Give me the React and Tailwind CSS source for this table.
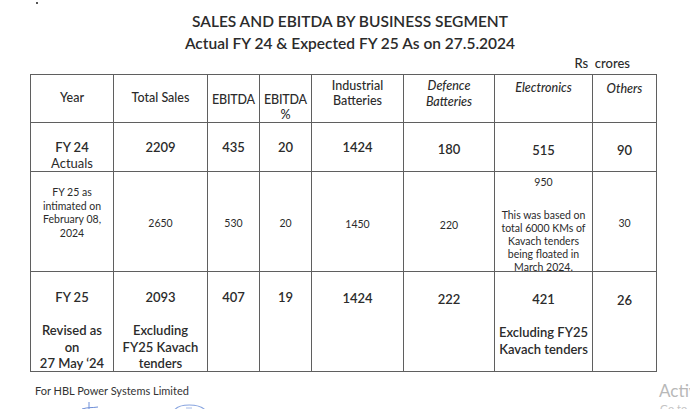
export default function App() {
    const th = "border border-[#5f5f5f] align-top text-center font-medium text-[12.5px] leading-[15px] text-[#2b2b2b]";
    const td = "border border-[#5f5f5f] align-top text-center text-[#2b2b2b]";
    const big = "font-semibold text-[13px] leading-[16px]";
    const small = "text-[10.5px] leading-[13.5px]";

    return (
        <div className="relative w-[690px] h-[409px] overflow-hidden bg-white font-['Lato',sans-serif] text-[#2b2b2b]">
            <div className="absolute left-[36px] top-[2px] w-[2px] h-[2px] bg-[#555]"></div>

            <div className="pt-[10px] pl-[10px] text-center font-semibold text-[15.5px] leading-[22px]">
                <div>SALES AND EBITDA BY BUSINESS SEGMENT</div>
                <div>Actual FY 24 &amp; Expected FY 25 As on 27.5.2024</div>
            </div>
            <div className="mt-[2px] pr-[60px] text-right font-medium text-[13px] leading-[14px]">
                Rs&nbsp; crores
            </div>

            <table className="mt-[4px] ml-[30px] w-[626px] table-fixed border-collapse">
                <colgroup>
                    <col className="w-[83px]" />
                    <col className="w-[94px]" />
                    <col className="w-[52px]" />
                    <col className="w-[52px]" />
                    <col className="w-[92px]" />
                    <col className="w-[91px]" />
                    <col className="w-[98px]" />
                    <col className="w-[64px]" />
                </colgroup>
                <thead>
                    <tr className="h-[48px]">
                        <th className={th + " pt-[15px]"}>Year</th>
                        <th className={th + " pt-[15px]"}>Total Sales</th>
                        <th className={th + " pt-[17px] text-[11.5px] tracking-[-0.2px]"}>EBITDA</th>
                        <th className={th + " pt-[17px] text-[11.5px] tracking-[-0.2px]"}>
                            <div className="-mb-[6px]">
                                EBITDA
                                <br />%
                            </div>
                        </th>
                        <th className={th + " pt-[3px]"}>
                            Industrial
                            <br />
                            Batteries
                        </th>
                        <th className={th + " pt-[3px] italic leading-[16px]"}>
                            Defence
                            <br />
                            Batteries
                        </th>
                        <th className={th + " pt-[5px] italic"}>Electronics</th>
                        <th className={th + " pt-[6px] italic"}>Others</th>
                    </tr>
                </thead>
                <tbody>
                    <tr className="h-[49px]">
                        <td className={td + " pt-[16px] text-[13px] leading-[16px]"}>
                            <div className="font-semibold">FY 24</div>
                            <div>Actuals</div>
                        </td>
                        <td className={td + " pt-[16px] " + big}>2209</td>
                        <td className={td + " pt-[16px] " + big}>435</td>
                        <td className={td + " pt-[16px] " + big}>20</td>
                        <td className={td + " pt-[16px] " + big}>1424</td>
                        <td className={td + " pt-[18px] " + big}>180</td>
                        <td className={td + " pt-[19px] " + big}>515</td>
                        <td className={td + " pt-[19px] " + big}>90</td>
                    </tr>
                    <tr className="h-[100px]">
                        <td className={td + " pt-[14px] " + small}>
                            FY 25 as
                            <br />
                            intimated on
                            <br />
                            February 08,
                            <br />
                            2024
                        </td>
                        <td className={td + " pt-[45px] " + small}>2650</td>
                        <td className={td + " pt-[45px] " + small}>530</td>
                        <td className={td + " pt-[45px] " + small}>20</td>
                        <td className={td + " pt-[46px] " + small}>1450</td>
                        <td className={td + " pt-[47px] " + small}>220</td>
                        <td className={td + " pt-[4px] " + small}>
                            <div className="-mb-[12px]">
                                <div>950</div>
                                <div className="mt-[19px] leading-[13px]">
                                    This was based on
                                    <br />
                                    total 6000 KMs of
                                    <br />
                                    Kavach tenders
                                    <br />
                                    being floated in
                                    <br />
                                    March 2024.
                                </div>
                            </div>
                        </td>
                        <td className={td + " pt-[45px] " + small}>30</td>
                    </tr>
                    <tr className="h-[100px]">
                        <td className={td + " pt-[17px] font-semibold text-[13px] leading-[16.5px]"}>
                            <div className="-mb-[4px]">
                                FY 25
                                <br />
                                &nbsp;
                                <br />
                                Revised as
                                <br />
                                on
                                <br />
                                27 May ‘24
                            </div>
                        </td>
                        <td className={td + " pt-[17px] font-semibold text-[13px] leading-[16.5px]"}>
                            <div className="-mb-[4px]">
                                2093
                                <br />
                                &nbsp;
                                <br />
                                Excluding
                                <br />
                                FY25 Kavach
                                <br />
                                tenders
                            </div>
                        </td>
                        <td className={td + " pt-[17px] " + big}>407</td>
                        <td className={td + " pt-[17px] " + big}>19</td>
                        <td className={td + " pt-[18px] " + big}>1424</td>
                        <td className={td + " pt-[19px] " + big}>222</td>
                        <td className={td + " pt-[19px] font-semibold text-[13px] leading-[16.5px]"}>
                            421
                            <br />
                            &nbsp;
                            <br />
                            Excluding FY25
                            <br />
                            Kavach tenders
                        </td>
                        <td className={td + " pt-[20px] " + big}>26</td>
                    </tr>
                </tbody>
            </table>

            <div className="mt-[12px] ml-[35px] text-[11px] leading-[14px] text-[#333]">
                For HBL Power Systems Limited
            </div>
            <div className="flex items-start gap-[60px] ml-[80px] mt-[1px]">
                <svg width="30" height="12" viewBox="0 0 30 12">
                    <path d="M2 10 C8 8 12 9 18 8" stroke="#6f8fd8" strokeWidth="1" fill="none" />
                    <path d="M9 3 L9 10" stroke="#6f8fd8" strokeWidth="1" />
                </svg>
                <svg width="40" height="12" viewBox="0 0 40 12">
                    <path d="M4 12 C8 4 30 4 36 12" stroke="#8aa6e0" strokeWidth="1.2" fill="none" />
                    <path d="M16 9 L22 9" stroke="#a8bce8" strokeWidth="1" />
                </svg>
            </div>

            <div className="absolute left-[659px] top-[381px] text-[17px] leading-[20px] text-[#b8b8b8] whitespace-nowrap">
                Activate Windows
            </div>
            <div className="absolute left-[660px] top-[402px] text-[11px] leading-[14px] text-[#c4c4c4] whitespace-nowrap">
                Go to Settings to activate Windows.
            </div>
        </div>
    );
}
